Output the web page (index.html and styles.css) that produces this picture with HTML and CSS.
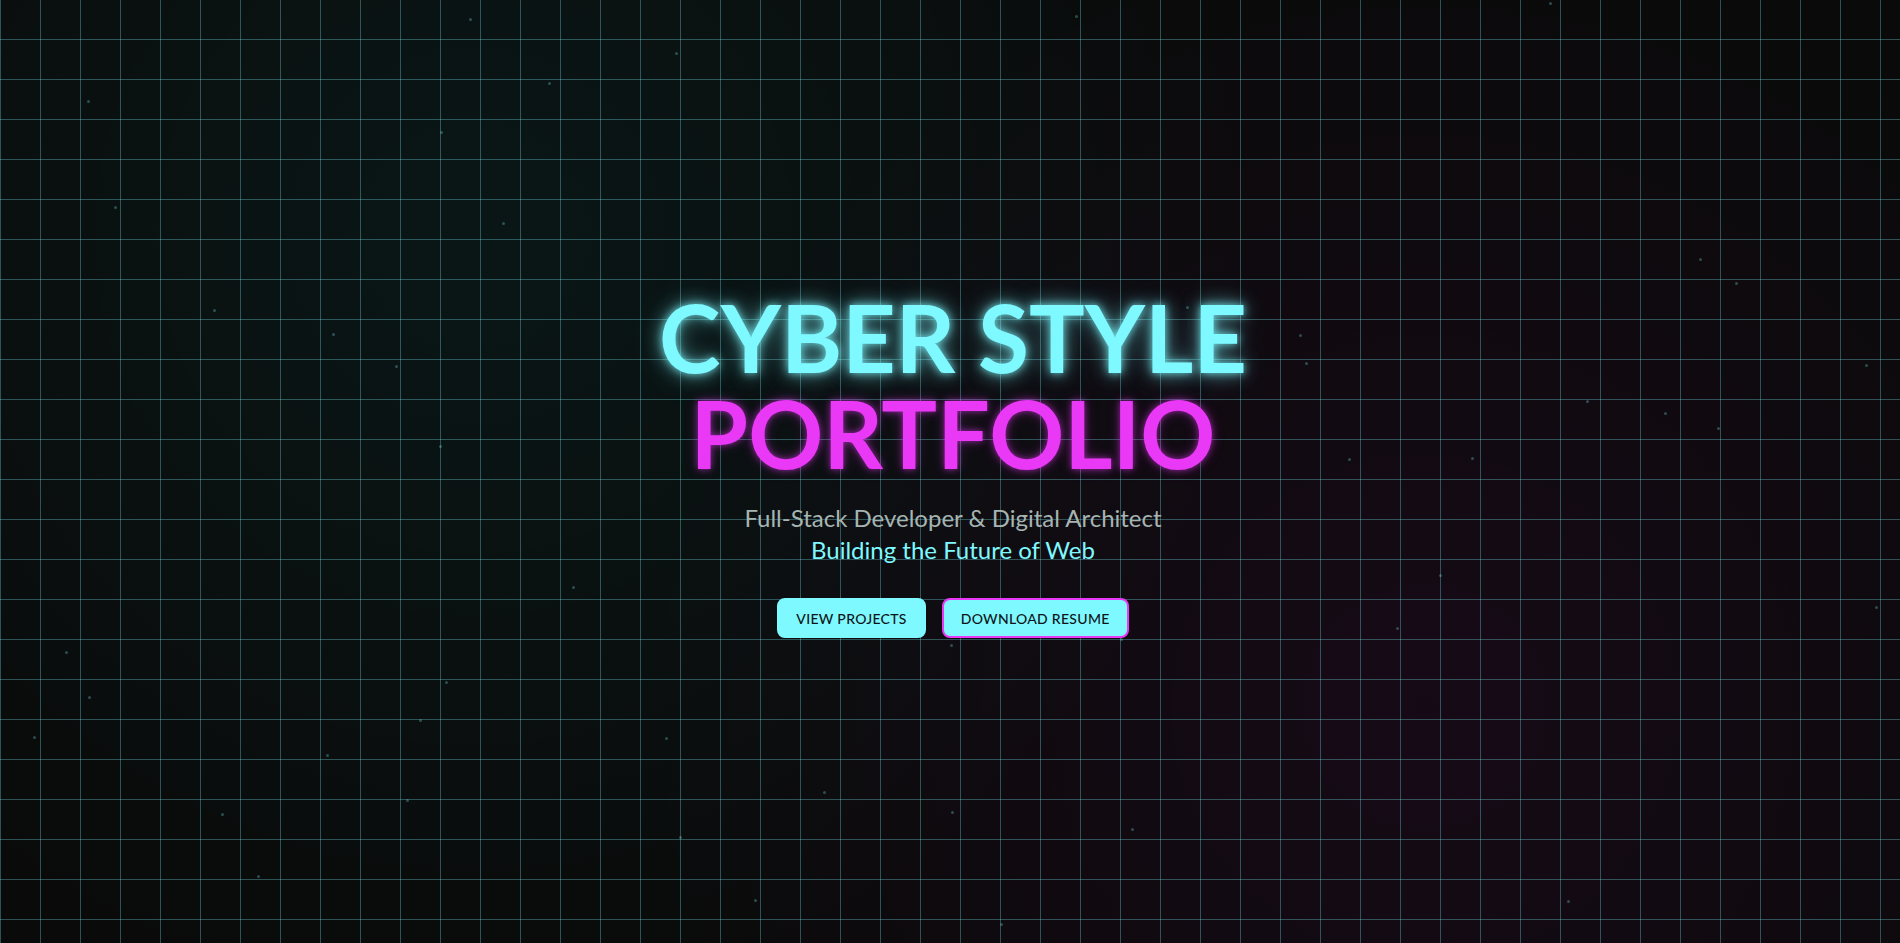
FILE: index.html
```html
<!DOCTYPE html>
<html lang="en">
<head>
<meta charset="utf-8">
<title>Cyber Style Portfolio</title>
<link rel="stylesheet" href="styles.css">
</head>
<body>
<div class="page">
  <div class="particles">
    <span class="dot" style="left:469px;top:18px"></span>
    <span class="dot" style="left:675px;top:52px"></span>
    <span class="dot" style="left:548px;top:82px"></span>
    <span class="dot" style="left:87px;top:100px"></span>
    <span class="dot" style="left:440px;top:131px"></span>
    <span class="dot" style="left:1075px;top:15px"></span>
    <span class="dot" style="left:1549px;top:2px"></span>
    <span class="dot" style="left:114px;top:206px"></span>
    <span class="dot" style="left:502px;top:222px"></span>
    <span class="dot" style="left:213px;top:309px"></span>
    <span class="dot" style="left:332px;top:333px"></span>
    <span class="dot" style="left:395px;top:365px"></span>
    <span class="dot" style="left:439px;top:445px"></span>
    <span class="dot" style="left:1699px;top:258px"></span>
    <span class="dot" style="left:1735px;top:282px"></span>
    <span class="dot" style="left:1299px;top:334px"></span>
    <span class="dot" style="left:1305px;top:362px"></span>
    <span class="dot" style="left:1586px;top:400px"></span>
    <span class="dot" style="left:1664px;top:412px"></span>
    <span class="dot" style="left:1717px;top:427px"></span>
    <span class="dot" style="left:1348px;top:458px"></span>
    <span class="dot" style="left:1471px;top:457px"></span>
    <span class="dot" style="left:1186px;top:306px"></span>
    <span class="dot" style="left:1865px;top:364px"></span>
    <span class="dot" style="left:572px;top:586px"></span>
    <span class="dot" style="left:1439px;top:574px"></span>
    <span class="dot" style="left:1396px;top:627px"></span>
    <span class="dot" style="left:1875px;top:606px"></span>
    <span class="dot" style="left:65px;top:651px"></span>
    <span class="dot" style="left:88px;top:696px"></span>
    <span class="dot" style="left:445px;top:681px"></span>
    <span class="dot" style="left:419px;top:719px"></span>
    <span class="dot" style="left:33px;top:736px"></span>
    <span class="dot" style="left:665px;top:737px"></span>
    <span class="dot" style="left:326px;top:754px"></span>
    <span class="dot" style="left:823px;top:791px"></span>
    <span class="dot" style="left:406px;top:799px"></span>
    <span class="dot" style="left:221px;top:813px"></span>
    <span class="dot" style="left:951px;top:811px"></span>
    <span class="dot" style="left:1131px;top:828px"></span>
    <span class="dot" style="left:679px;top:836px"></span>
    <span class="dot" style="left:257px;top:875px"></span>
    <span class="dot" style="left:754px;top:899px"></span>
    <span class="dot" style="left:1000px;top:923px"></span>
    <span class="dot" style="left:1567px;top:900px"></span>
    <span class="dot" style="left:950px;top:644px"></span>
    <span class="dot" style="left:1120px;top:638px"></span>
  </div>

  <main class="hero">
    <h1 class="title">
      <span class="title-line title-cyan">CYBER STYLE</span>
      <span class="title-line title-magenta">PORTFOLIO</span>
    </h1>
    <p class="subtitle">
      <span class="sub-main">Full-Stack Developer &amp; Digital Architect</span>
      <span class="sub-accent">Building the Future of Web</span>
    </p>
    <div class="actions">
      <button class="btn btn-primary" type="button">VIEW PROJECTS</button>
      <button class="btn btn-outline" type="button">DOWNLOAD RESUME</button>
    </div>
  </main>
</div>
</body>
</html>
```
FILE: styles.css
```css
* { box-sizing: border-box; }

html, body {
  margin: 0;
  padding: 0;
  height: 100%;
  overflow: hidden;
}

body {
  font-family: "Lato", "Open Sans", sans-serif;
  background: #0a0a0a;
}

.page {
  position: relative;
  width: 100%;
  height: 100vh;
  overflow: hidden;
  background:
    linear-gradient(rgba(125, 249, 255, 0.3) 1px, transparent 1px) 0 -1px / 40px 40px,
    linear-gradient(90deg, rgba(125, 249, 255, 0.3) 1px, transparent 1px) 0 0 / 40px 40px,
    radial-gradient(circle at 25% 25%, rgba(0, 255, 255, 0.05), transparent 50%),
    radial-gradient(circle at 75% 75%, rgba(255, 0, 255, 0.05), transparent 50%),
    #0a0a0a;
}

.particles {
  position: absolute;
  inset: 0;
  pointer-events: none;
}

.dot {
  position: absolute;
  width: 3px;
  height: 3px;
  border-radius: 50%;
  background: rgba(125, 249, 255, 0.28);
}

.hero {
  position: relative;
  z-index: 1;
  height: 100%;
  display: flex;
  flex-direction: column;
  align-items: center;
  justify-content: center;
  padding: 0 0 16px 6px;
  text-align: center;
}

.title {
  margin: 0;
  font-size: 93px;
  line-height: 96px;
  font-weight: 700;
}

.title-line {
  display: block;
}

.title-cyan {
  color: #7df9ff;
  text-shadow:
    0 0 8px rgba(125, 249, 255, 0.8),
    0 0 18px rgba(125, 249, 255, 0.5),
    0 0 32px rgba(125, 249, 255, 0.3);
}

.title-magenta {
  color: #e938f6;
  text-shadow:
    0 0 6px rgba(233, 56, 246, 0.55),
    0 0 14px rgba(233, 56, 246, 0.25);
}

.subtitle {
  margin: 21px 0 0;
  font-size: 24px;
  line-height: 32px;
  font-weight: 400;
}

.sub-main,
.sub-accent {
  display: block;
}

.sub-main {
  color: #a6b4b2;
}

.sub-accent {
  color: #7df9ff;
}

.actions {
  display: flex;
  gap: 16px;
  margin-top: 32px;
}

.btn {
  height: 40px;
  padding: 0 17px;
  border: 2px solid #7df9ff;
  border-radius: 8px;
  background: #7df9ff;
  color: #111418;
  font-family: "Lato", "Open Sans", sans-serif;
  font-size: 14px;
  font-weight: 500;
  letter-spacing: 0.3px;
  cursor: pointer;
}

.btn-outline {
  border-color: #e938f6;
}
```
